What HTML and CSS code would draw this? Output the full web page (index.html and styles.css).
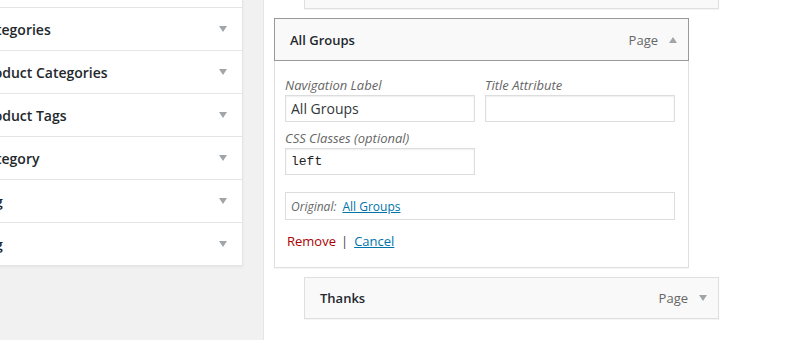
FILE: index.html
```html
<!DOCTYPE html>
<html>
<head>
<meta charset="utf-8">
<link rel="stylesheet" href="styles.css">
</head>
<body>
<div class="page">
  <div class="sidebar">
    <div class="acc-panel">
      <div class="acc-row"><span class="acc-title">Pages</span><span class="arrow-down"></span></div>
      <div class="acc-row"><span class="acc-title">Categories</span><span class="arrow-down"></span></div>
      <div class="acc-row"><span class="acc-title">Product Categories</span><span class="arrow-down"></span></div>
      <div class="acc-row"><span class="acc-title">Product Tags</span><span class="arrow-down"></span></div>
      <div class="acc-row"><span class="acc-title">Category</span><span class="arrow-down"></span></div>
      <div class="acc-row"><span class="acc-title">Tag</span><span class="arrow-down"></span></div>
      <div class="acc-row"><span class="acc-title">Tag</span><span class="arrow-down"></span></div>
    </div>
  </div>
  <div class="menu-col">
    <div class="menu-item depth-1 prev">
      <div class="item-bar"><span class="item-title">Home</span><span class="item-type">Page</span><span class="arrow-down"></span></div>
    </div>
    <div class="menu-item open">
      <div class="item-bar"><span class="item-title">All Groups</span><span class="item-type">Page</span><span class="arrow-up"></span></div>
      <div class="item-settings">
        <div class="fields">
          <label class="field">
            <span class="field-label">Navigation Label</span>
            <input class="text-input" type="text" value="All Groups">
          </label>
          <label class="field">
            <span class="field-label">Title Attribute</span>
            <input class="text-input" type="text" value="">
          </label>
          <label class="field">
            <span class="field-label">CSS Classes (optional)</span>
            <input class="text-input mono" type="text" value="left">
          </label>
        </div>
        <div class="original"><span class="original-label">Original:</span><a class="link" href="#">All Groups</a></div>
        <div class="actions"><a class="remove" href="#">Remove</a><span class="sep">|</span><a class="link cancel" href="#">Cancel</a></div>
      </div>
    </div>
    <div class="menu-item depth-1">
      <div class="item-bar"><span class="item-title">Thanks</span><span class="item-type">Page</span><span class="arrow-down"></span></div>
    </div>
  </div>
</div>
</body>
</html>
```

FILE: styles.css
```css
* { box-sizing: border-box; }
html, body {
  margin: 0;
  padding: 0;
  height: 100%;
  overflow: hidden;
  background: #f1f1f1;
  font-family: "Open Sans", "Liberation Sans", sans-serif;
  color: #23282d;
}
.page {
  display: flex;
  height: 340px;
}
.sidebar {
  width: 299px;
  flex: none;
  margin-left: -36px;
  padding-right: 20px;
}
.acc-panel {
  margin-top: -36px;
  background: #fff;
  border: 1px solid #e5e5e5;
  border-top: none;
  box-shadow: 0 1px 2px rgba(0,0,0,.06);
}
.acc-row {
  height: 43px;
  display: flex;
  align-items: center;
  justify-content: space-between;
  padding: 0 15px 0 14px;
  border-top: 1px solid #e5e5e5;
}
.acc-row:first-child { border-top: none; }
.acc-title {
  font-size: 14px;
  font-weight: 600;
  color: #23282d;
}
.arrow-down, .arrow-up {
  width: 0;
  height: 0;
  border-left: 4px solid transparent;
  border-right: 4px solid transparent;
}
.arrow-down { border-top: 6px solid #a0a5aa; }
.arrow-up { border-bottom: 6px solid #a0a5aa; }
.menu-col {
  flex: 1;
  background: #fff;
  border-left: 1px solid #e5e5e5;
  padding-left: 10px;
}
.menu-item {
  width: 415px;
  margin-top: 9px;
}
.menu-item.depth-1 { margin-left: 30px; }
.menu-item.prev { margin-top: -33px; }
.item-bar {
  height: 42px;
  display: flex;
  align-items: center;
  padding: 0 11px 0 15px;
  background: #f9f9f9;
  border: 1px solid #dfdfdf;
  box-shadow: 0 1px 1px rgba(0,0,0,.04);
}
.open .item-bar {
  height: 43px;
  border-color: #999;
  box-shadow: none;
}
.item-title {
  flex: 1;
  font-size: 13px;
  font-weight: 600;
  color: #23282d;
}
.item-type {
  font-size: 13px;
  color: #666;
  margin-right: 11px;
}
.item-settings {
  background: #fff;
  border: 1px solid #dfdfdf;
  border-top: none;
  padding: 15px 12px 17px 10px;
  box-shadow: 0 1px 1px rgba(0,0,0,.04);
}
.fields {
  display: grid;
  grid-template-columns: 190px 190px;
  column-gap: 10px;
  row-gap: 7px;
}
.field {
  display: flex;
  flex-direction: column;
}
.field-label {
  font-size: 13px;
  font-style: italic;
  line-height: 18px;
  color: #666;
  margin-bottom: 1px;
}
.text-input {
  height: 27px;
  width: 190px;
  border: 1px solid #ddd;
  box-shadow: inset 0 1px 2px rgba(0,0,0,.07);
  padding: 0 5px;
  font-family: "Open Sans", "Liberation Sans", sans-serif;
  font-size: 14px;
  color: #32373c;
  background: #fff;
  margin: 0;
  outline: none;
}
.text-input.mono {
  font-family: "Liberation Mono", "DejaVu Sans Mono", monospace;
  font-size: 13px;
  color: #222;
}
.original {
  margin-top: 17px;
  height: 28px;
  width: 390px;
  border: 1px solid #ddd;
  display: flex;
  align-items: center;
  padding-left: 5px;
  font-size: 12px;
}
.original-label {
  font-style: italic;
  color: #666;
  margin-right: 6px;
}
.link {
  color: #0073aa;
  text-decoration: underline;
}
.actions {
  margin-top: 12px;
  font-size: 13px;
  line-height: 18px;
  display: flex;
  align-items: center;
  padding-left: 2px;
}
.remove {
  color: #a00;
  text-decoration: none;
}
.sep {
  color: #444;
  margin: 0 5px;
}
.cancel {
  padding: 0 2px;
  margin-left: -1px;
}
```
